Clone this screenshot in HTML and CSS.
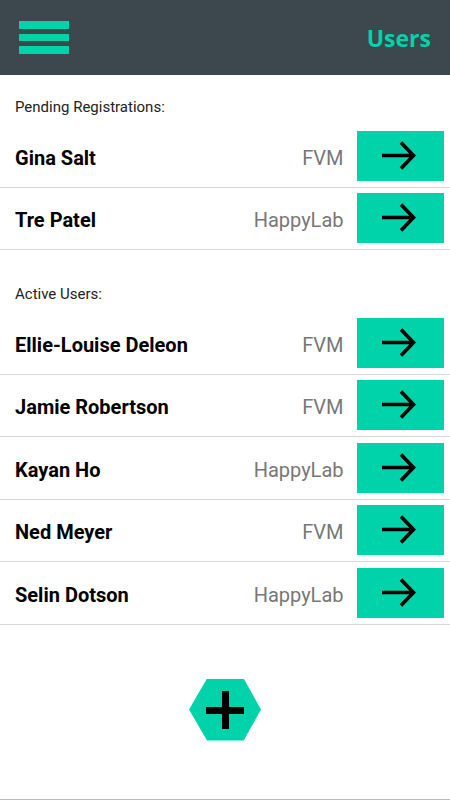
FILE: index.html
```html
<!DOCTYPE html>
<html>
<head>
<meta charset="utf-8">
<link rel="stylesheet" href="styles.css">
</head>
<body>
<header class="topbar">
  <div class="menu"><span></span><span></span><span></span></div>
  <div class="title">Users</div>
</header>
<main>
  <section class="group">
    <div class="label">Pending Registrations:</div>
    <div class="row"><span class="name">Gina Salt</span><span class="org">FVM</span><button class="go"><svg viewBox="0 0 87 50" width="87" height="50"><path d="M25 24.5H56.5M44 11.5L56.5 24.5L44 37.5" fill="none" stroke="#000" stroke-width="3.6" stroke-linejoin="miter"/></svg></button></div>
    <div class="row"><span class="name">Tre Patel</span><span class="org">HappyLab</span><button class="go"><svg viewBox="0 0 87 50" width="87" height="50"><path d="M25 24.5H56.5M44 11.5L56.5 24.5L44 37.5" fill="none" stroke="#000" stroke-width="3.6" stroke-linejoin="miter"/></svg></button></div>
  </section>
  <section class="group second">
    <div class="label">Active Users:</div>
    <div class="row"><span class="name">Ellie-Louise Deleon</span><span class="org">FVM</span><button class="go"><svg viewBox="0 0 87 50" width="87" height="50"><path d="M25 24.5H56.5M44 11.5L56.5 24.5L44 37.5" fill="none" stroke="#000" stroke-width="3.6" stroke-linejoin="miter"/></svg></button></div>
    <div class="row"><span class="name">Jamie Robertson</span><span class="org">FVM</span><button class="go"><svg viewBox="0 0 87 50" width="87" height="50"><path d="M25 24.5H56.5M44 11.5L56.5 24.5L44 37.5" fill="none" stroke="#000" stroke-width="3.6" stroke-linejoin="miter"/></svg></button></div>
    <div class="row"><span class="name">Kayan Ho</span><span class="org">HappyLab</span><button class="go"><svg viewBox="0 0 87 50" width="87" height="50"><path d="M25 24.5H56.5M44 11.5L56.5 24.5L44 37.5" fill="none" stroke="#000" stroke-width="3.6" stroke-linejoin="miter"/></svg></button></div>
    <div class="row"><span class="name">Ned Meyer</span><span class="org">FVM</span><button class="go"><svg viewBox="0 0 87 50" width="87" height="50"><path d="M25 24.5H56.5M44 11.5L56.5 24.5L44 37.5" fill="none" stroke="#000" stroke-width="3.6" stroke-linejoin="miter"/></svg></button></div>
    <div class="row"><span class="name">Selin Dotson</span><span class="org">HappyLab</span><button class="go"><svg viewBox="0 0 87 50" width="87" height="50"><path d="M25 24.5H56.5M44 11.5L56.5 24.5L44 37.5" fill="none" stroke="#000" stroke-width="3.6" stroke-linejoin="miter"/></svg></button></div>
  </section>
  <div class="fab-area">
    <button class="fab"><span class="plus-h"></span><span class="plus-v"></span></button>
  </div>
</main>
<footer class="foot"></footer>
</body>
</html>
```
FILE: styles.css
```css
* { box-sizing: border-box; }
html, body { margin: 0; padding: 0; }
body {
  font-family: Roboto, "Liberation Sans", sans-serif;
  background: #fff;
  color: #000;
  width: 450px;
}
.topbar {
  height: 75px;
  background: #3c474e;
  display: flex;
  align-items: center;
  justify-content: space-between;
  padding: 0 19px;
}
.menu {
  width: 50px;
  display: flex;
  flex-direction: column;
  gap: 5px;
}
.menu span {
  display: block;
  height: 7.5px;
  background: #00d2aa;
}
.title {
  font-family: "Open Sans", sans-serif;
  font-weight: 700;
  font-size: 23px;
  color: #00d2aa;
  padding-top: 1px;
}
.label {
  font-size: 15px;
  line-height: 18px;
  color: #222;
  padding: 23px 15px 9px;
}
.second { margin-top: 12px; }
.row {
  height: 62.5px;
  border-bottom: 1px solid #d8d8d8;
  display: flex;
  align-items: center;
  padding: 0 6.5px 0 15px;
}
.name {
  flex: 1;
  font-weight: 700;
  font-size: 20px;
  color: #000;
  padding-top: 4px;
}
.org {
  font-size: 20px;
  color: #777;
  margin-right: 13px;
  padding-top: 4px;
}
.go {
  width: 87px;
  height: 50px;
  padding: 0;
  border: none;
  background: #00d2aa;
  display: block;
}
.go svg { display: block; }
.fab-area {
  height: 174px;
  display: flex;
  align-items: center;
  justify-content: center;
  padding-bottom: 4px;
}
.fab {
  position: relative;
  width: 72px;
  height: 62px;
  border: none;
  padding: 0;
  background: #00d2aa;
  clip-path: polygon(25% 0, 76% 0, 100% 50%, 76% 100%, 25% 100%, 0 50%);
}
.plus-h, .plus-v {
  position: absolute;
  background: #000;
}
.plus-h { left: 17px; top: 28px; width: 38px; height: 7px; }
.plus-v { left: 32.5px; top: 12px; width: 7px; height: 38px; }
.foot {
  height: 40px;
  border-top: 1px solid #bbb;
}
```
